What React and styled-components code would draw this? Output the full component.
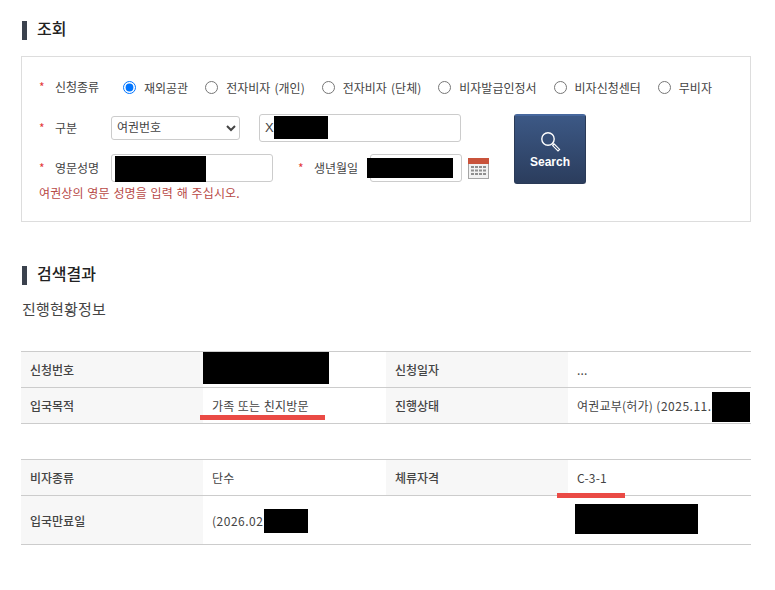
import React from 'react';
import styled, { createGlobalStyle } from 'styled-components';

const GlobalStyle = createGlobalStyle`
  html, body {
    margin: 0;
    padding: 0;
    background: #fff;
  }
  body {
    font-family: "Noto Sans CJK KR", "Noto Sans", sans-serif;
    font-size: 12px;
    color: #444;
  }
`;

const Page = styled.div`
  width: 775px;
  height: 590px;
  padding: 21px 0 0 21px;
  box-sizing: border-box;
  overflow: hidden;
`;

const SectionTitle = styled.h2`
  display: flex;
  align-items: flex-start;
  gap: 10px;
  height: 19px;
  margin: ${(p) => p.$margin || '0'};
  padding-left: 1px;
  font-size: 16px;
  font-weight: 500;
  line-height: 15px;
  color: #222;
  &::before {
    content: '';
    width: 5px;
    height: 19px;
    background: #3b424e;
  }
`;

const Panel = styled.section`
  box-sizing: border-box;
  width: 730px;
  height: 166px;
  margin-top: 16px;
  padding: 17px 0 0 17px;
  border: 1px solid #ddd;
`;

const RadioRow = styled.div`
  display: flex;
  align-items: center;
  height: 26px;
  margin-bottom: 14px;
`;

const FieldLabel = styled.label`
  display: flex;
  align-items: center;
  flex: none;
  width: ${(p) => p.$width}px;
  margin-left: ${(p) => p.$left || 0}px;
  line-height: 28px;
  &::before {
    content: '*';
    width: 16px;
    color: #e33b3b;
    font-size: 12px;
  }
`;

const RadioGroup = styled.div`
  display: flex;
  align-items: center;
  gap: 17px;
`;

const RadioOption = styled.label`
  display: flex;
  align-items: center;
  gap: 8px;
  word-spacing: 1.5px;
  input {
    width: 13px;
    height: 13px;
    margin: 0;
  }
`;

const FormBody = styled.div`
  display: flex;
  align-items: flex-start;
`;

const Fields = styled.div`
  width: 475px;
`;

const FieldRow = styled.div`
  display: flex;
  align-items: center;
  height: 28px;
  margin-bottom: ${(p) => p.$bottom || 0}px;
`;

const Select = styled.select`
  box-sizing: border-box;
  width: 129px;
  height: 24px;
  margin-right: 19px;
  padding: 0 0 3px 1px;
  border: 1px solid #ccc;
  border-radius: 3px;
  background: #fff;
  font: inherit;
  color: #444;
`;

const InputBox = styled.div`
  position: relative;
  box-sizing: border-box;
  width: ${(p) => p.$width}px;
  height: 28px;
  padding-left: 5px;
  border: 1px solid #ccc;
  border-radius: 3px;
  line-height: 26px;
  font-family: "Liberation Sans", sans-serif;
  font-size: 13px;
`;

const Redaction = styled.span`
  position: absolute;
  left: ${(p) => p.$x}px;
  top: ${(p) => p.$y}px;
  width: ${(p) => p.$w}px;
  height: ${(p) => p.$h}px;
  background: #000;
`;

const CalendarIcon = styled.svg`
  flex: none;
  width: 21px;
  height: 21px;
  margin-left: 6px;
`;

const HelpText = styled.p`
  margin: 1px 0 0;
  line-height: 20px;
  letter-spacing: 0.1px;
  word-spacing: 1px;
  color: #b84a47;
`;

const SearchButton = styled.button`
  display: flex;
  flex-direction: column;
  align-items: center;
  box-sizing: border-box;
  width: 72px;
  height: 70px;
  margin-left: 0;
  padding: 15px 0 0;
  border: 1px solid #2a3a57;
  border-top: 2px solid #46679d;
  border-radius: 3px;
  background: linear-gradient(#3c5885, #2b3d5d);
  color: #fff;
  font-family: "Liberation Sans", sans-serif;
  font-size: 12px;
  font-weight: 700;
  svg {
    width: 21px;
    height: 21px;
    margin-bottom: 3px;
  }
`;

const Subtitle = styled.h3`
  margin: 14px 0 32px;
  padding-left: 1px;
  font-size: 15px;
  font-weight: 400;
  line-height: 20px;
  letter-spacing: 0.2px;
  color: #444;
`;

const InfoTable = styled.table`
  width: 730px;
  margin-bottom: ${(p) => p.$bottom || 0}px;
  border-collapse: collapse;
  table-layout: fixed;
  border-top: 1px solid #ccc;
`;

const HeadCell = styled.th`
  position: relative;
  box-sizing: border-box;
  height: ${(p) => p.$height || 36}px;
  padding: 0 0 0 9px;
  border-bottom: 1px solid #ccc;
  background: #f7f7f7;
  font-weight: 500;
  text-align: left;
  color: #444;
`;

const ValueCell = styled.td`
  position: relative;
  box-sizing: border-box;
  height: ${(p) => p.$height || 36}px;
  padding: 0 0 0 9px;
  border-bottom: 1px solid #ccc;
  letter-spacing: 0.2px;
  word-spacing: 0.5px;
  color: #444;
`;

const DateText = styled.span`
  letter-spacing: 0.5px;
`;

const RedMark = styled.span`
  position: absolute;
  left: ${(p) => p.$x}px;
  top: ${(p) => p.$y}px;
  width: ${(p) => p.$w}px;
  height: 5px;
  background: #ea4a45;
`;

const Columns = () => (
  <colgroup>
    <col width="182" />
    <col width="183" />
    <col width="182" />
    <col width="183" />
  </colgroup>
);

const radioOptions = ['재외공관', '전자비자 (개인)', '전자비자 (단체)', '비자발급인정서', '비자신청센터', '무비자'];

export default function App() {
  return (
    <Page>
      <GlobalStyle />
      <SectionTitle>조회</SectionTitle>
      <Panel>
        <RadioRow>
          <FieldLabel $width={84}>신청종류</FieldLabel>
          <RadioGroup>
            {radioOptions.map((option, i) => (
              <RadioOption key={option}>
                <input type="radio" name="kind" defaultChecked={i === 0} />
                {option}
              </RadioOption>
            ))}
          </RadioGroup>
        </RadioRow>
        <FormBody>
          <Fields>
            <FieldRow $bottom={12}>
              <FieldLabel $width={72}>구분</FieldLabel>
              <Select defaultValue="passport">
                <option value="passport">여권번호</option>
              </Select>
              <InputBox $width={202}>
                X
                <Redaction $x={14} $y={1} $w={54} $h={23} />
              </InputBox>
            </FieldRow>
            <FieldRow>
              <FieldLabel $width={72}>영문성명</FieldLabel>
              <InputBox $width={162}>
                <Redaction $x={3} $y={1} $w={91} $h={26} />
              </InputBox>
              <FieldLabel $width={72} $left={25}>생년월일</FieldLabel>
              <InputBox $width={92}>
                <Redaction $x={-4} $y={3} $w={86} $h={20} />
              </InputBox>
              <CalendarIcon viewBox="0 0 21 21">
                <rect x="0.5" y="0.5" width="20" height="20" fill="#f2f2f2" stroke="#a5a5a5" />
                <rect x="0" y="0" width="21" height="6" fill="#c9533b" />
                <path
                  d="M3 8h3v2H3zM7 8h3v2H7zM11 8h3v2h-3zM15 8h3v2h-3zM3 11.5h3v2H3zM7 11.5h3v2H7zM11 11.5h3v2h-3zM15 11.5h3v2h-3zM3 15h3v2H3zM7 15h3v2H7zM11 15h3v2h-3zM15 15h3v2h-3z"
                  fill="#8f8f8f"
                />
              </CalendarIcon>
            </FieldRow>
            <HelpText>여권상의 영문 성명을 입력 해 주십시오.</HelpText>
          </Fields>
          <SearchButton type="button">
            <svg viewBox="0 0 21 21" fill="none" stroke="#fff">
              <circle cx="8" cy="8" r="6.2" strokeWidth="1.4" />
              <path d="M12.6 12.4l1.6 1.6" strokeWidth="1.4" />
              <path d="M14.2 13l5.4 5.4-1.6 1.6-5.4-5.4z" strokeWidth="1.1" />
            </svg>
            Search
          </SearchButton>
        </FormBody>
      </Panel>

      <SectionTitle $margin="44px 0 0">검색결과</SectionTitle>
      <Subtitle>진행현황정보</Subtitle>

      <InfoTable $bottom={35}>
        <Columns />
        <tbody>
          <tr>
            <HeadCell>신청번호</HeadCell>
            <ValueCell>
              <Redaction $x={0} $y={0} $w={126} $h={32} />
            </ValueCell>
            <HeadCell>신청일자</HeadCell>
            <ValueCell>...</ValueCell>
          </tr>
          <tr>
            <HeadCell>입국목적</HeadCell>
            <ValueCell>
              가족 또는 친지방문
              <RedMark $x={-3} $y={27} $w={125} />
            </ValueCell>
            <HeadCell>진행상태</HeadCell>
            <ValueCell>
              여권교부(허가) <DateText>(2025.11.</DateText>
              <Redaction $x={144} $y={4} $w={38} $h={30} />
            </ValueCell>
          </tr>
        </tbody>
      </InfoTable>

      <InfoTable>
        <Columns />
        <tbody>
          <tr>
            <HeadCell>비자종류</HeadCell>
            <ValueCell>단수</ValueCell>
            <HeadCell>체류자격</HeadCell>
            <ValueCell>
              C-3-1
              <RedMark $x={-11} $y={33} $w={68} />
            </ValueCell>
          </tr>
          <tr>
            <HeadCell $height={49}>입국만료일</HeadCell>
            <ValueCell $height={49}>
              <DateText>(2026.02</DateText>
              <Redaction $x={61} $y={13} $w={44} $h={24} />
            </ValueCell>
            <ValueCell $height={49} />
            <ValueCell $height={49}>
              <Redaction $x={7} $y={8} $w={123} $h={30} />
            </ValueCell>
          </tr>
        </tbody>
      </InfoTable>
    </Page>
  );
}
